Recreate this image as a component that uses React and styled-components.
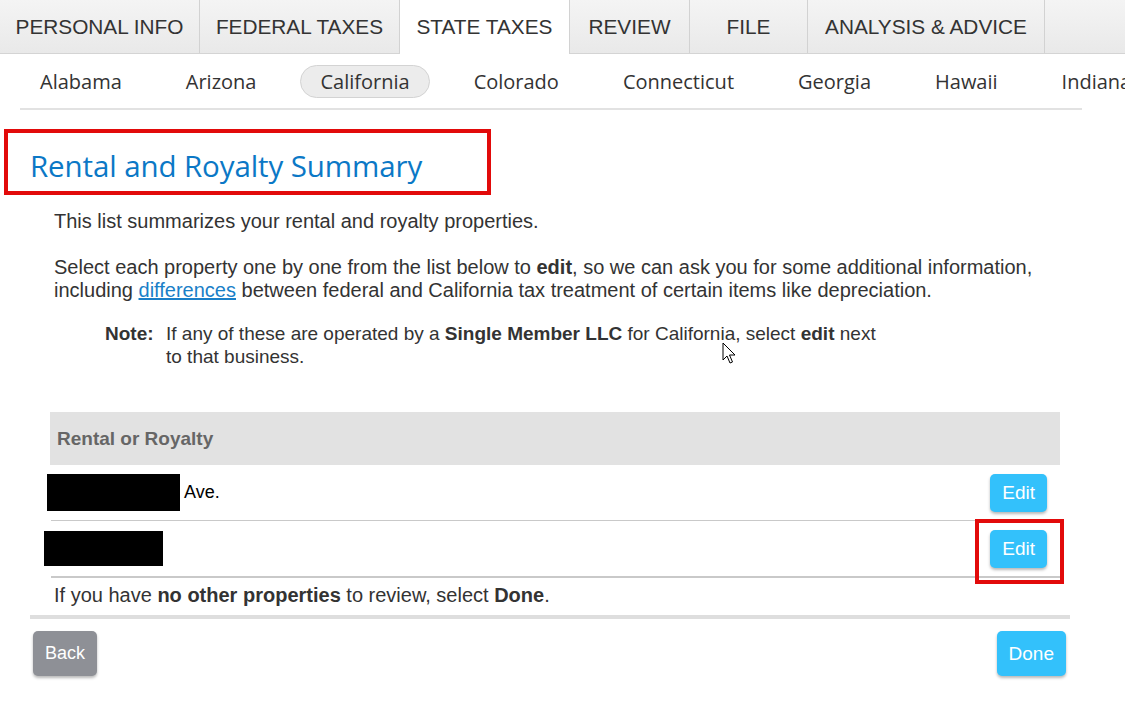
import React from "react";
import styled, { createGlobalStyle } from "styled-components";

const GlobalStyle = createGlobalStyle`
  body {
    margin: 0;
    background: #fff;
    font-family: "Liberation Sans", Arial, sans-serif;
    color: #333;
  }
`;

const tabs = [
  { label: "PERSONAL INFO", width: 200 },
  { label: "FEDERAL TAXES", width: 200 },
  { label: "STATE TAXES", width: 170, active: true },
  { label: "REVIEW", width: 120 },
  { label: "FILE", width: 118 },
  { label: "ANALYSIS & ADVICE", width: 237 },
];

const states = ["Alabama", "Arizona", "California", "Colorado", "Connecticut", "Georgia", "Hawaii", "Indiana"];

const Page = styled.div`
  position: relative;
  width: 1125px;
  height: 704px;
  overflow: hidden;
`;

const TabBar = styled.nav`
  display: flex;
  height: 54px;
  background: linear-gradient(#f4f4f4, #e9e9e9);
  border-bottom: 1px solid #d4d4d4;
  box-sizing: border-box;
`;

const Tab = styled.div`
  width: ${({ width }) => width}px;
  flex: none;
  display: flex;
  align-items: center;
  justify-content: center;
  font-size: 20.8px;
  color: #333;
  border-right: 1px solid #d2d2d2;
  box-sizing: border-box;
  background: ${({ active }) => (active ? "#fff" : "transparent")};
  margin-bottom: ${({ active }) => (active ? "-1px" : "0")};
`;

const StateBar = styled.nav`
  display: flex;
  align-items: center;
  gap: 24px;
  height: 56px;
  margin: 0 43px 0 20px;
  white-space: nowrap;
  border-bottom: 2px solid #e2e2e2;
  box-sizing: border-box;
`;

const StateItem = styled.div`
  flex: none;
  font-family: "Open Sans", sans-serif;
  font-size: 20px;
  color: #333;
  padding: 2px 19px;
  border-radius: 18px;
  border: 1px solid ${({ active }) => (active ? "#d3d3d3" : "transparent")};
  background: ${({ active }) => (active ? "#ececec" : "transparent")};
`;

const Main = styled.main`
  padding-top: 19px;
`;

const TitleBox = styled.div`
  margin-left: 4px;
  width: 487px;
  height: 66px;
  border: 4px solid #e20a0a;
  box-sizing: border-box;
  display: flex;
  align-items: center;
  padding-left: 22px;
`;

const Title = styled.h1`
  margin: 6px 0 0;
  font-family: "Open Sans", sans-serif;
  font-weight: 400;
  font-size: 29.5px;
  color: #0b78c6;
  letter-spacing: -0.1px;
`;

const Content = styled.section`
  width: 1040px;
  margin-left: 30px;
`;

const Para = styled.p`
  margin: 0;
  padding-left: 24px;
  font-size: 20px;
  line-height: 23px;
  color: #333;
  margin-top: ${({ top }) => top}px;
`;

const Link = styled.a`
  color: #1a7fc8;
  text-decoration: underline;
`;

const Note = styled.div`
  display: flex;
  margin: 20px 0 0 75px;
  font-size: 19px;
  line-height: 23px;
`;

const NoteLabel = styled.b`
  flex: none;
  width: 61px;
`;

const NoteText = styled.span`
  width: 715px;
`;

const Table = styled.div`
  margin: 44px 10px 0 20px;
`;

const HeaderRow = styled.div`
  height: 53px;
  background: #e2e2e2;
  display: flex;
  align-items: center;
  padding-left: 7px;
  font-weight: bold;
  font-size: 19px;
  color: #666;
`;

const Row = styled.div`
  display: flex;
  align-items: center;
  justify-content: space-between;
  height: ${({ thick }) => (thick ? 57 : 56)}px;
  border-bottom: ${({ thick }) => (thick ? 2 : 1)}px solid #c9c9c9;
  padding-right: 13px;
  box-sizing: border-box;
  margin-left: 1px;
`;

const Address = styled.div`
  display: flex;
  align-items: center;
  gap: 4px;
  margin-left: ${({ shift }) => shift}px;
  font-size: 18px;
  color: #000;
`;

const Redacted = styled.span`
  display: inline-block;
  background: #000;
  width: ${({ w }) => w}px;
  height: ${({ h }) => h}px;
`;

const Button = styled.button`
  border: none;
  border-radius: 5px;
  background: ${({ gray }) => (gray ? "#8e9096" : "#33c1fb")};
  color: #fff;
  font-family: "Liberation Sans", Arial, sans-serif;
  font-size: ${({ fs }) => fs || 19}px;
  height: ${({ h }) => h || 38}px;
  padding: 0 ${({ px }) => px || 12}px;
  box-shadow: 0 2px 3px rgba(0, 0, 0, 0.28);
  cursor: pointer;
`;

const Highlight = styled.div`
  position: relative;
  display: flex;
  align-items: center;
  justify-content: center;
  &::after {
    content: "";
    position: absolute;
    left: -15px;
    right: -17px;
    top: -11px;
    bottom: -16px;
    border: 4px solid #e20a0a;
  }
`;

const Footer = styled.div`
  padding-left: 24px;
  font-size: 20px;
  line-height: 34px;
  color: #333;
  border-bottom: 4px solid #dedede;
  padding-bottom: 3px;
`;

const Actions = styled.div`
  display: flex;
  justify-content: space-between;
  padding: 12px 4px 0 3px;
`;

const Cursor = styled.svg`
  position: absolute;
  left: 722px;
  top: 342px;
`;

export default function App() {
  return (
    <Page>
      <GlobalStyle />
      <TabBar>
        {tabs.map((t) => (
          <Tab key={t.label} width={t.width} active={t.active}>
            {t.label}
          </Tab>
        ))}
      </TabBar>
      <StateBar>
        {states.map((s) => (
          <StateItem key={s} active={s === "California"}>
            {s}
          </StateItem>
        ))}
      </StateBar>
      <Main>
        <TitleBox>
          <Title>Rental and Royalty Summary</Title>
        </TitleBox>
        <Content>
          <Para top={15}>This list summarizes your rental and royalty properties.</Para>
          <Para top={23}>
            Select each property one by one from the list below to <b>edit</b>, so we can ask you for some additional information,
            including <Link href="#">differences</Link> between federal and California tax treatment of certain items like depreciation.
          </Para>
          <Note>
            <NoteLabel>Note:</NoteLabel>
            <NoteText>
              If any of these are operated by a <b>Single Member LLC</b> for California, select <b>edit</b> next to that business.
            </NoteText>
          </Note>
          <Table>
            <HeaderRow>Rental or Royalty</HeaderRow>
            <Row>
              <Address shift={-4}>
                <Redacted w={133} h={37} />
                Ave.
              </Address>
              <Button>Edit</Button>
            </Row>
            <Row thick>
              <Address shift={-7}>
                <Redacted w={119} h={35} />
              </Address>
              <Highlight>
                <Button>Edit</Button>
              </Highlight>
            </Row>
          </Table>
          <Footer>
            If you have <b>no other properties</b> to review, select <b>Done</b>.
          </Footer>
          <Actions>
            <Button gray h={45} px={12} fs={18}>Back</Button>
            <Button h={45} px={12}>Done</Button>
          </Actions>
        </Content>
      </Main>
      <Cursor width="14" height="24" viewBox="0 0 14 24">
        <path d="M1 1 L1 18 L5 14 L8 21 L10.5 20 L7.5 13 L13 13 Z" fill="#fff" stroke="#000" strokeWidth="1" strokeLinejoin="round" />
      </Cursor>
    </Page>
  );
}
